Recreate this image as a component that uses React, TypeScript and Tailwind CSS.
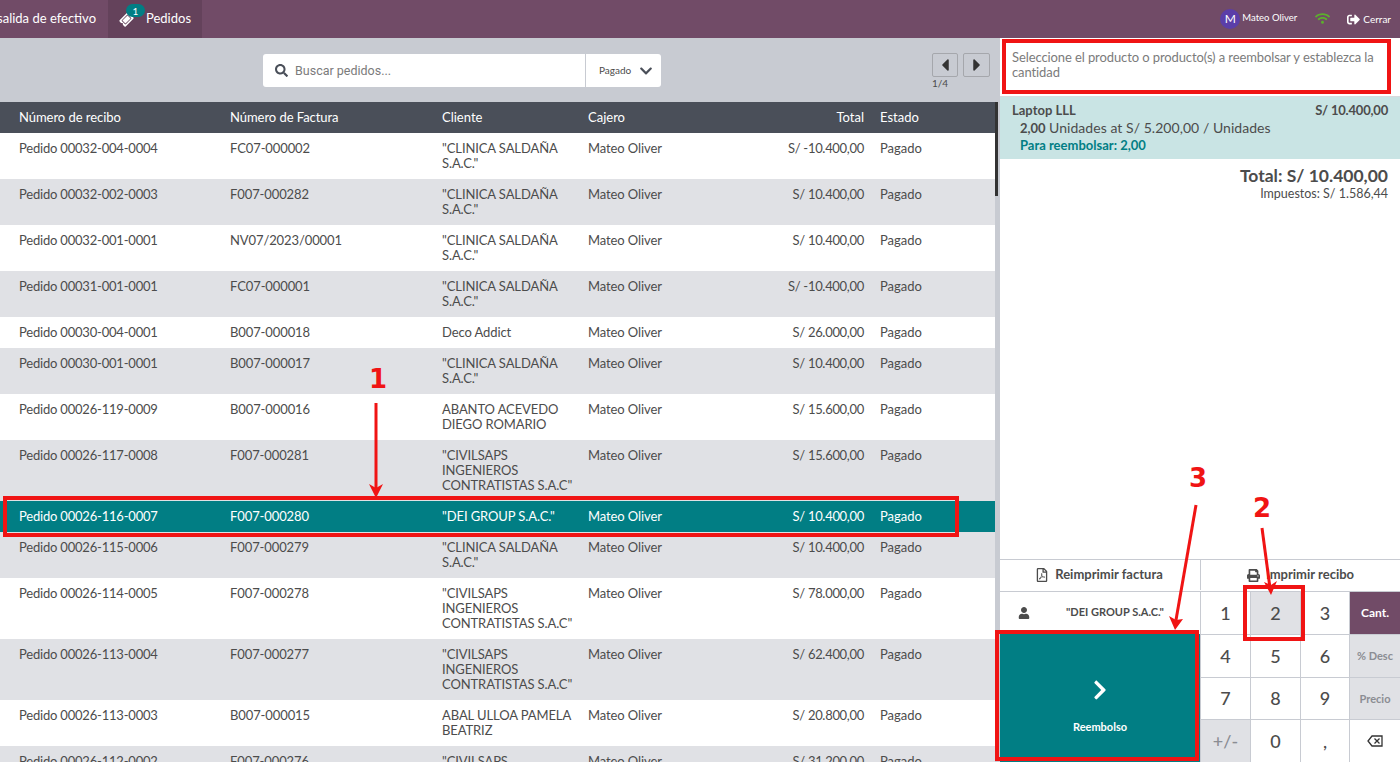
import React from 'react';
import { FaSearch, FaChevronDown, FaCaretLeft, FaCaretRight, FaUser, FaPrint, FaRegFilePdf, FaSignOutAlt, FaWifi, FaTicketAlt, FaChevronRight } from 'react-icons/fa';

const clinica = ['"CLINICA SALDAÑA', 'S.A.C."'];
const civil = ['"CIVILSAPS', 'INGENIEROS', 'CONTRATISTAS S.A.C"'];

const orders = [
  { id: '00032-004-0004', inv: 'FC07-000002', client: clinica, total: 'S/ -10.400,00' },
  { id: '00032-002-0003', inv: 'F007-000282', client: clinica, total: 'S/ 10.400,00' },
  { id: '00032-001-0001', inv: 'NV07/2023/00001', client: clinica, total: 'S/ 10.400,00' },
  { id: '00031-001-0001', inv: 'FC07-000001', client: clinica, total: 'S/ -10.400,00' },
  { id: '00030-004-0001', inv: 'B007-000018', client: ['Deco Addict'], total: 'S/ 26.000,00' },
  { id: '00030-001-0001', inv: 'B007-000017', client: clinica, total: 'S/ 10.400,00' },
  { id: '00026-119-0009', inv: 'B007-000016', client: ['ABANTO ACEVEDO', 'DIEGO ROMARIO'], total: 'S/ 15.600,00' },
  { id: '00026-117-0008', inv: 'F007-000281', client: civil, total: 'S/ 15.600,00' },
  { id: '00026-116-0007', inv: 'F007-000280', client: ['"DEI GROUP S.A.C."'], total: 'S/ 10.400,00', selected: true },
  { id: '00026-115-0006', inv: 'F007-000279', client: clinica, total: 'S/ 10.400,00' },
  { id: '00026-114-0005', inv: 'F007-000278', client: civil, total: 'S/ 78.000,00' },
  { id: '00026-113-0004', inv: 'F007-000277', client: civil, total: 'S/ 62.400,00' },
  { id: '00026-113-0003', inv: 'B007-000015', client: ['ABAL ULLOA PAMELA', 'BEATRIZ'], total: 'S/ 20.800,00' },
  { id: '00026-112-0002', inv: 'F007-000276', client: civil, total: 'S/ 31.200,00' },
];

const rowGrid = 'grid grid-cols-[230px_211px_147px_162px_114px_1fr]';

function OrderRow({ order, index }: { order: (typeof orders)[number]; index: number }) {
  const bg = order.selected ? 'bg-[#017e84] text-white' : index % 2 === 0 ? 'bg-white text-[#4c4c4c]' : 'bg-[#e0e1e5] text-[#4c4c4c]';
  return (
    <div className={`${rowGrid} ${bg} shrink-0 py-2 text-[13px] leading-[15px]`}>
      <div className="pl-[19px] tracking-[-0.2px]">Pedido {order.id}</div>
      <div className="tracking-[-0.1px]">{order.inv}</div>
      <div className="pl-px tracking-[-0.1px]">
        {order.client.map((line) => (
          <div key={line}>{line}</div>
        ))}
      </div>
      <div className="tracking-[-0.1px]">Mateo Oliver</div>
      <div className="text-right tracking-[-0.3px]">{order.total}</div>
      <div className="pl-4">Pagado</div>
    </div>
  );
}

function NumKey({ label, className = '' }: { label: React.ReactNode; className?: string }) {
  return (
    <div className={`flex items-center justify-center border-l border-t border-[#c8cbd2] ${className}`}>
      {label}
    </div>
  );
}

function BackspaceIcon() {
  return (
    <svg width="16" height="12" viewBox="0 0 16 12" fill="none" stroke="#333" strokeWidth="1.3">
      <path d="M5 1h10v10H5L1 6z" />
      <path d="M7.5 3.5l5 5M12.5 3.5l-5 5" />
    </svg>
  );
}

function Annotations() {
  return (
    <>
      <div className="absolute left-[3px] top-[496px] h-[41px] w-[956px] border-4 border-[#f01414]" />
      <div className="absolute left-[1002px] top-[39px] h-[55px] w-[389px] border-4 border-[#f01414]" />
      <div className="absolute left-[1243px] top-[585px] h-[56px] w-[62px] border-4 border-[#f01414]" />
      <div className="absolute left-[995px] top-[630px] h-[131px] w-[204px] border-4 border-[#f01414]" />
      <svg className="absolute left-0 top-0" width="1400" height="762" fill="none" stroke="#f01414" strokeWidth="3">
        <path d="M376 403V490" />
        <path d="M369 484l7 4 7-4-7 14z" fill="#f01414" stroke="none" />
        <path d="M1262 528l8 60" />
        <path d="M1264 582l7 3 6-4-6 14z" fill="#f01414" stroke="none" />
        <path d="M1196 505l-20 115" />
        <path d="M1169 616l7 4 7-1-8 11z" fill="#f01414" stroke="none" />
      </svg>
      <div className="absolute left-[369px] top-[364px] font-['DejaVu_Sans',sans-serif] text-[26px] leading-[30px] font-bold text-[#f01414]">1</div>
      <div className="absolute left-[1253px] top-[493px] font-['DejaVu_Sans',sans-serif] text-[26px] leading-[30px] font-bold text-[#f01414]">2</div>
      <div className="absolute left-[1189px] top-[463px] font-['DejaVu_Sans',sans-serif] text-[26px] leading-[30px] font-bold text-[#f01414]">3</div>
    </>
  );
}

export default function App() {
  return (
    <div className="relative flex h-[762px] w-[1400px] flex-col overflow-hidden bg-white font-['Lato',sans-serif] text-[#4c4c4c]">
      <header className="flex h-[38px] shrink-0 items-center bg-[#714b67] text-[13px] text-white">
        <div className="flex h-full w-[108px] items-center justify-end pr-3 whitespace-nowrap">salida de efectivo</div>
        <div className="flex h-full w-[94px] items-center bg-[#64425b] pl-[12px]">
          <div className="relative flex h-4 w-[26px] items-center">
            <FaTicketAlt className="-rotate-45 text-[13px]" />
            <span className="absolute left-[6px] top-[-7px] flex h-[13px] w-[19px] items-center justify-center rounded-full bg-[#017e84] text-[10px] leading-none">1</span>
          </div>
          <span>Pedidos</span>
        </div>
        <div className="ml-auto flex items-center">
          <span className="mr-[2px] flex h-5 w-5 items-center justify-center rounded-full bg-[#5b3ea8] text-xs">M</span>
          <span className="-mt-0.5 w-[55px] text-[9.5px] whitespace-nowrap">Mateo Oliver</span>
          <FaWifi className="ml-[18px] -mt-px text-[15px] text-[#5cb02c]" />
          <FaSignOutAlt className="ml-[17px] text-[13px]" />
          <span className="mr-[9px] ml-[3px] text-[10px]">Cerrar</span>
        </div>
      </header>

      <div className="flex min-h-0 flex-1">
        <section className="flex w-[1000px] shrink-0 flex-col">
          <div className="flex h-[64px] shrink-0 items-start bg-[#c8cbd2]">
            <div className="mt-4 ml-[263px] flex h-[33px] w-[398px] items-center rounded-[3px] bg-white font-['Roboto',sans-serif] text-[12.5px]">
              <FaSearch className="ml-3 text-[13px] text-[#4a4f59]" />
              <span className="ml-[7px] pt-px text-[#7b7b7b]">Buscar pedidos...</span>
              <div className="ml-auto flex h-full w-[76px] items-center border-l border-[#c8cbd2] pl-[13px] font-['Lato',sans-serif] text-[10px]">
                Pagado
                <FaChevronDown className="ml-[8px] text-[14px] text-[#4a4f59]" />
              </div>
            </div>
            <div className="mt-[15px] ml-[271px] text-[10px] leading-none">
              <div className="flex gap-[5px]">
                <div className="flex h-6 w-[26px] items-center justify-center rounded-[2px] border border-[#a5a7ac]"><FaCaretLeft className="text-[20px] text-[#333]" /></div>
                <div className="flex h-6 w-[27px] items-center justify-center rounded-[2px] border border-[#a5a7ac]"><FaCaretRight className="text-[20px] text-[#333]" /></div>
              </div>
              <div className="mt-[1px]">1/4</div>
            </div>
          </div>
          <div className="flex min-h-0 flex-1 bg-[#c8cbd2]">
            <div className="flex w-[995px] shrink-0 flex-col overflow-hidden">
              <div className={`${rowGrid} h-[31px] shrink-0 items-center bg-[#4a4f59] text-[13px] text-white`}>
                <div className="pl-[19px] tracking-[-0.05px]">Número de recibo</div>
                <div className="tracking-[-0.05px]">Número de Factura</div>
                <div className="pl-px">Cliente</div>
                <div>Cajero</div>
                <div className="text-right">Total</div>
                <div className="pl-4">Estado</div>
              </div>
              {orders.map((order, i) => (
                <OrderRow key={order.id} order={order} index={i} />
              ))}
            </div>
            <div className="h-[94px] w-[3px] bg-[#333]" />
          </div>
        </section>

        <aside className="flex min-w-0 flex-1 flex-col">
          <div className="h-[59px] shrink-0 border-b border-[#d9dadd] pt-[12px] pr-[11px] pl-[12px] text-[13px] leading-[15px] tracking-[-0.1px] text-[#7b7b7b]">
            Seleccione el producto o producto(s) a reembolsar y establezca la cantidad
          </div>
          <div className="h-[62px] shrink-0 bg-[#c9e4e4] px-[12px] pt-[5px] text-[13px] leading-[17px]">
            <div className="flex justify-between font-bold">
              <span>Laptop LLL</span>
              <span className="tracking-[-0.2px]">S/ 10.400,00</span>
            </div>
            <div className="pl-2"><b>2,00</b> <span className="text-[14px] tracking-[0.05px]">Unidades at S/ 5.200,00 / Unidades</span></div>
            <div className="pl-2 font-bold text-[#017e84]">Para reembolsar: 2,00</div>
          </div>
          <div className="flex-1 px-[12px] pt-[8px] text-right">
            <div className="text-[17.5px] leading-[18px] font-bold">Total: S/ 10.400,00</div>
            <div className="mt-px text-[12.5px] leading-[16px]">Impuestos: S/ 1.586,44</div>
          </div>
          <div className="flex h-[32px] shrink-0 border-t border-[#c8cbd2] pb-px text-[13px] font-bold">
            <div className="flex w-[200px] items-center justify-center gap-[6px] pr-[2px]"><FaRegFilePdf className="text-[14px]" />Reimprimir factura</div>
            <div className="flex flex-1 items-center justify-center gap-[6px] border-l border-[#c8cbd2]"><FaPrint className="text-[13px]" />Imprimir recibo</div>
          </div>
          <div className="flex h-[171px] shrink-0">
            <div className="flex w-[200px] flex-col border-t border-[#c8cbd2]">
              <div className="flex h-[42px] shrink-0 items-center pb-px text-[11px] font-bold">
                <FaUser className="ml-[18px] text-[12px]" />
                <span className="ml-[36px]">"DEI GROUP S.A.C."</span>
              </div>
              <div className="flex flex-1 flex-col items-center justify-center bg-[#017e84] pt-[19px] text-white">
                <FaChevronRight className="text-[22px]" />
                <span className="mt-[18px] text-[11px] font-bold">Reembolso</span>
              </div>
            </div>
            <div className="grid flex-1 grid-cols-[50px_50px_49px_1fr] grid-rows-4 text-lg font-medium">
              <NumKey label="1" />
              <NumKey label="2" className="bg-[#e0e1e5]" />
              <NumKey label="3" />
              <NumKey label="Cant." className="bg-[#714b67] text-[12px] font-bold text-white" />
              <NumKey label="4" />
              <NumKey label="5" />
              <NumKey label="6" />
              <NumKey label="% Desc" className="bg-[#e0e1e5] text-[11px] font-bold text-[#8b8d93]" />
              <NumKey label="7" />
              <NumKey label="8" />
              <NumKey label="9" />
              <NumKey label="Precio" className="bg-[#e0e1e5] text-[11px] font-bold text-[#8b8d93]" />
              <NumKey label="+/-" className="bg-[#e0e1e5] text-[#8b8d93]" />
              <NumKey label="0" />
              <NumKey label="," />
              <NumKey label={<BackspaceIcon />} />
            </div>
          </div>
        </aside>
      </div>
      <Annotations />
    </div>
  );
}
